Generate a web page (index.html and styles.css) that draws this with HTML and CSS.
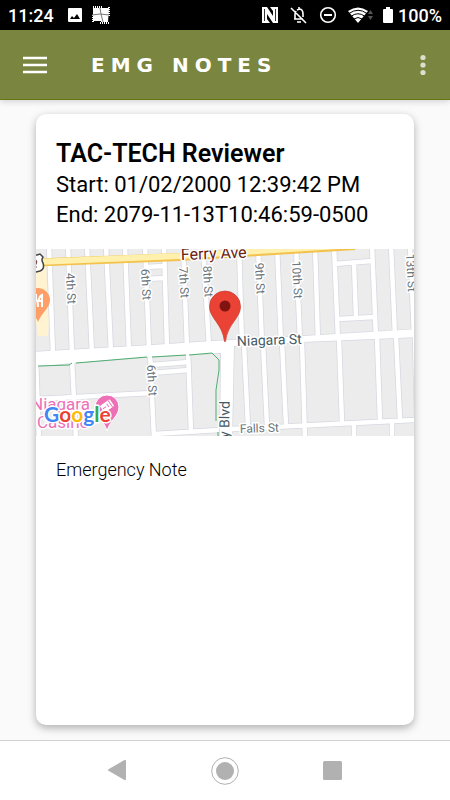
FILE: index.html
```html
<!DOCTYPE html>
<html lang="en">
	<head>
		<meta charset="utf-8">
		<meta name="viewport" content="width=device-width, initial-scale=1">
		<title>EMG Notes</title>
		<link rel="stylesheet" href="styles.css">
	</head>
	<body>
		<div class="statusbar">
			<span class="clock">11:24</span>
			<svg class="photo" width="16" height="16" viewBox="0 0 16 16"><path fill="#fff" fill-rule="evenodd" d="M2 1h12a1 1 0 0 1 1 1v12a1 1 0 0 1-1 1H2a1 1 0 0 1-1-1V2a1 1 0 0 1 1-1zM3 12h10L10 7l-3 4-2-2z"/></svg>
			<svg width="18" height="18" viewBox="0 0 18 18">
				<path fill="#fff" d="M1 2h16l-1 14H9v-1H1z"/>
				<path stroke="#fff" stroke-width="2" stroke-dasharray="1 1" d="M1 1h9M8 17h9M1 9v8M17 1v9"/>
				<path fill="none" stroke="#777" d="M8 2l1 6 2 8M0 9l8-1 9 1"/>
			</svg>
			<div class="indicators">
				<svg width="18" height="18" viewBox="0 0 18 18">
					<path fill="#fff" d="M1 1l5 0 6 9V5L9 1h8v16h-5L6 8v5l3 4H1z"/>
					<path fill="none" stroke="#000" stroke-width=".8" d="M3.500 3v12M14.500 3v12"/>
				</svg>
				<svg width="18" height="18" viewBox="0 0 18 18">
					<path fill="none" stroke="#fff" stroke-width="1.600" d="M1 2l15 15M4 13h9M5 13V8l1-3M7 4l2-1c3 0 4 2 4 5v3M9 1v2M7 16h4"/>
				</svg>
				<svg width="18" height="18" viewBox="0 0 18 18">
					<circle cx="9" cy="9" r="7.300" fill="none" stroke="#fff" stroke-width="1.600"/>
					<path stroke="#fff" stroke-width="2" d="M5 9h8"/>
				</svg>
				<svg width="26" height="18" viewBox="0 0 26 18">
					<path fill="#fff" d="M0 5Q10-2 20 5L10 17z"/>
					<path fill="none" stroke="#000" d="M1 7.500Q10 1 19 7.500M3.500 10Q10 5.500 16.500 10M6 13q4-3 8 0"/>
					<path fill="#555" d="M20 8l2.500-4L25 8zM20 10h5l-2.500 4z"/>
				</svg>
				<svg class="battery" width="10" height="18" viewBox="0 0 10 18"><path fill="#fff" d="M3 1h4v2h2q1 0 1 1v12q0 1-1 1H1q-1 0-1-1V4q0-1 1-1h2z"/></svg>
				<span>100%</span>
			</div>
		</div>

		<header class="toolbar">
			<button class="icon-btn" aria-label="Menu">
				<svg width="24" height="18" viewBox="0 0 24 18"><path stroke="#fff" stroke-width="2.500" d="M0 2h24M0 9h24M0 16h24"/></svg>
			</button>
			<h1>EMG NOTES</h1>
			<button class="icon-btn" aria-label="More options">
				<svg width="6" height="22" viewBox="0 0 6 22" fill="#dcdfcd"><circle cx="3" cy="3.500" r="2.600"/><circle cx="3" cy="11" r="2.600"/><circle cx="3" cy="18.500" r="2.600"/></svg>
			</button>
		</header>

		<main>
			<article class="card">
				<div class="card-head">
					<h2>TAC-TECH Reviewer</h2>
					<p>Start: 01/02/2000 12:39:42 PM</p>
					<p>End: 2079-11-13T10:46:59-0500</p>
				</div>
				<svg class="map" viewBox="36 249 378 187">
					<defs>
						<!-- side streets, drawn once as casing and once as fill -->
						<path id="streets" fill="none" d="
							M49 245L53 355M68 245L72 355M87 245L92 354M106 245L111 353M125 245L129 352M145 245L149 350M164 245L167 349M183 245L187 348M203 245L209 347
							M239 245L242 345M258 245L262 344M277 245L281 343M296 245L300 342M315 245L318 341M334 245L338 340M372 245L376 338M391 245L395 336M410 245L414 335
							M334 264L372 261M338 319L375 317M354 263L356 318M146 267L164 266M147 279L164 278
							M36 359L39 440M72 360L76 440M150 352L154 440M188 350L191 432
							M36 399L76 397L152 393M151 365L189 362M151 373L189 370M154 434L219 430M231 429L416 420
							M244 344L248 427M263 343L267 427M282 342L286 425M302 341L305 440M339 339L342 423M377 337L380 421M396 336L400 420M415 335L417 420
							M354 423V440M392 421V440"/>
						<path id="avenues" d="M30 352L152 345L213 341L303 336L420 329V337L303 342L234 346L232 440H220L221 353L147 357L73 363L30 367z"/>
					</defs>
					<rect x="36" y="249" width="378" height="187" fill="#ececec"/>
					<path fill="#fff3d2" d="M36 264h10l3 55-1 17H38l-2-15z"/>
					<use href="#streets" stroke="#d6d8e0" stroke-width="6"/>
					<use href="#avenues" fill="#fff" stroke="#d6d8e0" stroke-width="1.400"/>
					<use href="#streets" stroke="#fff" stroke-width="4.500"/>
					<use href="#avenues" fill="#fff"/>
					<path fill="none" stroke="#f3c24c" stroke-width="8" d="M36 262.500L180 257L250 252.500L355 246"/>
					<path fill="none" stroke="#fff0ad" stroke-width="6" d="M36 262L180 256L250 251.500L355 245"/>
					<path fill="none" stroke="#4fae70" d="M38 366L69 365L72 363M76 363L147 357M152 357L186 355M189 355L212 353L219 360L219 370L216 390L216 421M218 432v5"/>

					<g class="street">
						<text transform="translate(66 273) rotate(87)">4th St</text>
						<text transform="translate(141 269) rotate(87)">6th St</text>
						<text transform="translate(179 267) rotate(87)">7th St</text>
						<text transform="translate(203 266) rotate(87)">8th St</text>
						<text transform="translate(255 263) rotate(87)">9th St</text>
						<text transform="translate(292 261) rotate(87)">10th St</text>
						<text transform="translate(406 254) rotate(87)">13th St</text>
						<text transform="translate(147 365) rotate(87)">6th St</text>
						<text transform="translate(240 433) rotate(-2)">Falls St</text>
					</g>
					<g class="street major">
						<text transform="translate(237 346) rotate(-2)">Niagara St</text>
						<text transform="translate(229 438) rotate(-89)">y Blvd</text>
					</g>
					<text class="ferry" transform="translate(181 260) rotate(-2)">Ferry Ave</text>

					<path fill="#fff" stroke="#444" stroke-width="1.500" d="M33 255h4l3-1 3 3q-2 3 0 6 2 6-3 8l-4 1h-3z"/>
					<path fill="none" stroke="#7b4a4a" stroke-width="1.200" d="M34 260q4 0 2 4l-2 3h3"/>
					<path fill="#ff9e67" d="M37 288a12 12 0 0 1 13 12c0 8-8 12-12 22-1-3-3-6-6-8v-25z"/>
					<path fill="none" stroke="#fff" stroke-width="2" d="M36 294v5q2 2 2 8M42 307V295q-3 1-3 6h3"/>

					<path fill="#ed6fb5" stroke="#fff" d="M107 395a12 12 0 0 1 12 12c0 9-9 13-12 24-3-11-12-15-12-24a12 12 0 0 1 12-12z"/>
					<g transform="rotate(-35 107 406)"><rect x="101" y="402" width="12" height="8" rx="1" fill="#fff"/><path fill="none" stroke="#ed6fb5" d="M102 406h4M108 404v4M111 402v8"/></g>
					<g class="place">
						<text x="31" y="410">Niagara</text>
						<text x="37" y="428">Casino</text>
					</g>
					<text class="google" x="44" y="422"><tspan fill="#4285f4">G</tspan><tspan fill="#ea4335">o</tspan><tspan fill="#fbbc05">o</tspan><tspan fill="#4285f4">g</tspan><tspan fill="#34a853">l</tspan><tspan fill="#ea4335">e</tspan></text>

					<path fill="#ea4335" stroke="#c93a2c" stroke-width=".7" d="M225 291a15.500 15.500 0 0 1 15.500 15.500c0 12-13 17-15 35h-1c-2-18-15-23-15-35A15.500 15.500 0 0 1 225 291z"/>
					<circle cx="225" cy="306" r="5.500" fill="#811411"/>
				</svg>
				<p class="note">Emergency Note</p>
			</article>
		</main>

		<nav class="navbar">
			<button class="icon-btn" aria-label="Back">
				<svg width="28" height="28" viewBox="0 0 28 28"><path fill="#b1b1b1" d="M5.500 12.200L21.500 3q1.500-.5 1.500 1v18q0 1.500-1.500 1L5.500 13.800q-1-.8 0-1.600z"/></svg>
			</button>
			<button class="icon-btn" aria-label="Home">
				<svg width="28" height="28" viewBox="0 0 28 28"><circle cx="14" cy="14" r="13.300" fill="none" stroke="#b1b1b1"/><circle cx="14" cy="14" r="9" fill="#b1b1b1"/></svg>
			</button>
			<button class="icon-btn" aria-label="Recents">
				<svg width="28" height="28" viewBox="0 0 28 28"><rect x="4" y="4" width="19" height="19" rx="1.500" fill="#b1b1b1"/></svg>
			</button>
		</nav>
	</body>
</html>
```

FILE: styles.css
```css
*{
	box-sizing: border-box;
}
body{
	margin: 0;
	min-height: 100vh;
	display: flex;
	flex-direction: column;
	font-family: Roboto, sans-serif;
	background-color: #fafafa;
	color: #000;
}
h1, h2, p{
	margin: 0;
}
svg{
	display: block;
	flex: none;
}
.icon-btn{
	border: 0;
	padding: 0;
	background: none;
	cursor: pointer;
}

/* status bar */
.statusbar{
	display: flex;
	align-items: center;
	height: 30px;
	padding: 0 8px;
	background-color: #000;
	color: #fff;
	font-size: 18px;
	font-weight: 500;
}
.photo{
	margin: 0 9px 0 13px;
}
.indicators{
	display: flex;
	align-items: center;
	gap: 11px;
	margin-left: auto;
}
.indicators span{
	margin-left: -6px;
}
.battery{
	margin-left: -2px;
}

/* toolbar */
.toolbar{
	display: flex;
	align-items: center;
	height: 70px;
	padding: 0 24px 0 23px;
	background-color: #7a8640;
	border-bottom: 1px solid #66750f;
	box-shadow: 0 2px 6px rgba(0, 0, 0, 0.15);
}
.toolbar h1{
	flex: 1;
	margin-left: 44px;
	color: #fff;
	font-family: "DejaVu Sans", sans-serif;
	font-size: 20px;
	font-weight: 700;
	letter-spacing: 6px;
}

/* card */
main{
	flex: 1;
	display: flex;
	padding: 14px 36px 15px;
}
.card{
	flex: 1;
	background-color: #fff;
	border-radius: 10px;
	box-shadow: 0 3px 8px rgba(0, 0, 0, 0.3);
}
.card-head{
	padding: 24px 20px 19px;
	font-size: 22px;
	line-height: 30px;
}
.card-head h2{
	font-size: 25px;
	font-weight: 600;
	line-height: 32px;
}
.note{
	padding: 22px 20px;
	font-size: 18px;
	font-weight: 300;
	line-height: 24px;
}

/* map */
.map{
	width: 100%;
	height: auto;
}
.map text{
	stroke: #fff;
	stroke-width: 3px;
	stroke-linejoin: round;
	paint-order: stroke;
}
.street{
	font-size: 12px;
	fill: #6b757c;
}
.major{
	font-size: 14px;
	fill: #455a64;
}
.ferry{
	font-size: 16px;
	fill: #6b2314;
}
.place{
	font-size: 17px;
	fill: #ed6fb5;
}
.google{
	font-family: Lato, sans-serif;
	font-size: 21px;
	font-weight: 700;
}

/* android navigation */
.navbar{
	display: flex;
	justify-content: center;
	align-items: center;
	gap: 80px;
	height: 60px;
	background-color: #fff;
	border-top: 1px solid #d2d2d2;
}
```
